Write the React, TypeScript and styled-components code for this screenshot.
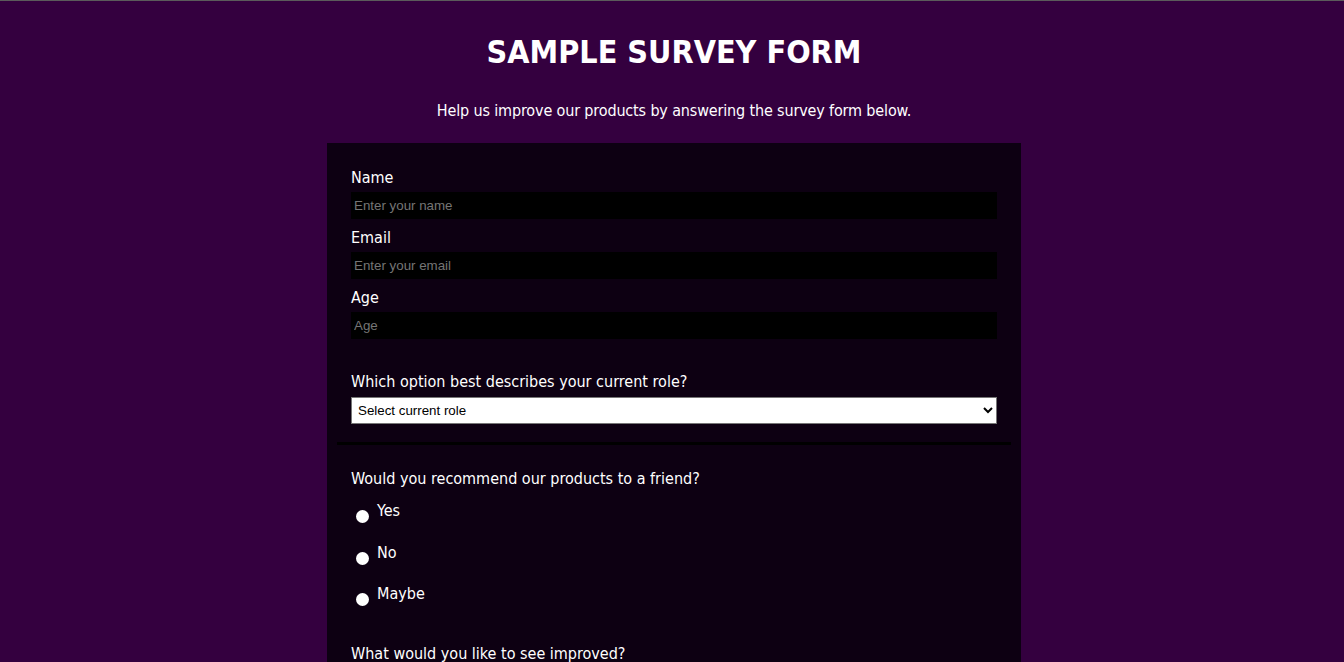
import React from "react";
import styled, { createGlobalStyle } from "styled-components";

const GlobalStyle = createGlobalStyle`
  html, body {
    margin: 0;
    padding: 0;
  }
  body {
    background: #34003f;
    color: #ffffff;
    font-family: "DejaVu Sans Condensed", "DejaVu Sans", Verdana, sans-serif;
    border-top: 1px solid #5b5b5b;
  }
`;

const Page = styled.main`
  display: flex;
  flex-direction: column;
  align-items: center;
  padding: 0 0 40px 4px;
`;

const Title = styled.h1`
  margin: 32px 0 0;
  font-size: 32px;
  line-height: 38px;
  font-weight: bold;
  text-align: center;
`;

const Description = styled.p`
  margin: 30px 0 23px;
  font-size: 16px;
  line-height: 19px;
  letter-spacing: -0.15px;
  text-align: center;
`;

const Form = styled.form`
  width: 694px;
  background: #0d0012;
  box-sizing: border-box;
`;

const Section = styled.div<{ $divider?: boolean }>`
  margin: 0 10px;
  padding: ${(p) => (p.$divider ? "25px 14px 18px" : "24px 14px 40px")};
  border-bottom: ${(p) => (p.$divider ? "3px solid #000" : "none")};
  display: flex;
  flex-direction: column;
`;

const Label = styled.label<{ $top?: number; $bottom?: number }>`
  display: block;
  font-size: 16px;
  line-height: 19px;
  margin-top: ${(p) => p.$top ?? 0}px;
  margin-bottom: ${(p) => p.$bottom ?? 5}px;
`;

const TextInput = styled.input`
  display: block;
  box-sizing: border-box;
  width: 100%;
  height: 27px;
  margin: 0 0 9px;
  padding: 0 3px;
  border: none;
  background: #000;
  color: #fff;
  font-family: "Liberation Sans", Arial, sans-serif;
  font-size: 13.33px;
  outline: none;
  &::placeholder {
    color: #757575;
  }
`;

const Select = styled.select`
  display: block;
  box-sizing: border-box;
  width: 100%;
  height: 27px;
  margin: 0;
  padding: 0 2px;
  border: 1px solid #767676;
  border-radius: 0;
  background: #fff;
  color: #000;
  font-family: "Liberation Sans", Arial, sans-serif;
  font-size: 13.33px;
`;

const Question = styled.p<{ $top?: number }>`
  margin: ${(p) => p.$top ?? 0}px 0 0;
  font-size: 16px;
  line-height: 19px;
`;

const RadioList = styled.div`
  display: flex;
  flex-direction: column;
  gap: 19.5px;
  margin-top: 13px;
`;

const RadioRow = styled.label`
  display: flex;
  align-items: flex-start;
  font-size: 16px;
  line-height: 19px;
`;

const Radio = styled.input`
  appearance: none;
  width: 13px;
  height: 13px;
  margin: 9px 8px 0 5px;
  border-radius: 50%;
  background: #fff;
  border: none;
  flex: none;
`;

const CheckList = styled.div`
  display: flex;
  flex-direction: column;
  gap: 12px;
  margin-top: 14px;
`;

const Check = styled.input`
  width: 13px;
  height: 13px;
  margin: 3px 8px 0 5px;
`;

export default function App() {
  return (
    <>
      <GlobalStyle />
      <Page>
        <Title>SAMPLE SURVEY FORM</Title>
        <Description>
          Help us improve our products by answering the survey form below.
        </Description>
        <Form onSubmit={(e) => e.preventDefault()}>
          <Section $divider>
            <Label htmlFor="name">Name</Label>
            <TextInput id="name" type="text" placeholder="Enter your name" />
            <Label htmlFor="email">Email</Label>
            <TextInput id="email" type="email" placeholder="Enter your email" />
            <Label htmlFor="age">Age</Label>
            <TextInput id="age" type="number" placeholder="Age" />
            <Label htmlFor="role" $top={24} $bottom={6}>
              Which option best describes your current role?
            </Label>
            <Select id="role" defaultValue="">
              <option value="" disabled>
                Select current role
              </option>
              <option value="student">Student</option>
              <option value="full-time">Full Time Job</option>
              <option value="learner">Full Time Learner</option>
              <option value="other">Other</option>
            </Select>
          </Section>
          <Section>
            <Question>Would you recommend our products to a friend?</Question>
            <RadioList>
              <RadioRow>
                <Radio type="radio" name="recommend" value="yes" />
                Yes
              </RadioRow>
              <RadioRow>
                <Radio type="radio" name="recommend" value="no" />
                No
              </RadioRow>
              <RadioRow>
                <Radio type="radio" name="recommend" value="maybe" />
                Maybe
              </RadioRow>
            </RadioList>
            <Question $top={38}>What would you like to see improved?</Question>
            <CheckList>
              <RadioRow>
                <Check type="checkbox" />
                Front-end Projects
              </RadioRow>
              <RadioRow>
                <Check type="checkbox" />
                Back-end Projects
              </RadioRow>
            </CheckList>
          </Section>
        </Form>
      </Page>
    </>
  );
}
